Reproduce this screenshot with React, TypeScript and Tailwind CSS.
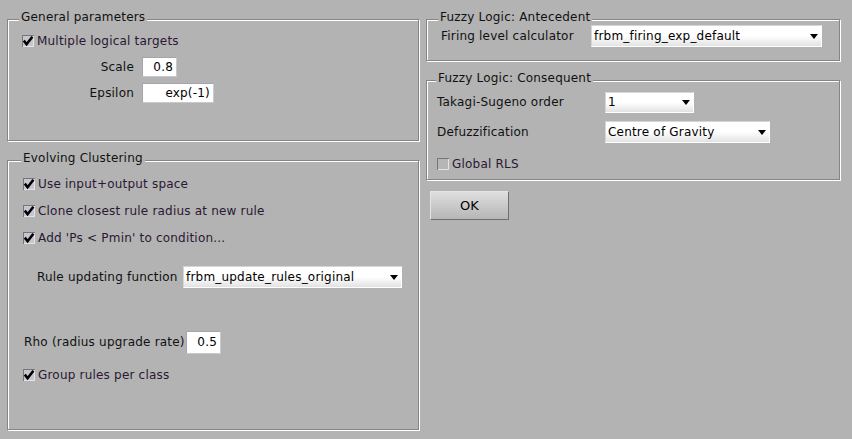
import React from "react";

const font = { fontFamily: '"DejaVu Sans", sans-serif' };

const Panel = ({
  title,
  titleLeft,
  className,
  children,
}: {
  title: string;
  titleLeft: string;
  className: string;
  children?: React.ReactNode;
}) => (
  <div
    className={
      "relative border border-[#858585] shadow-[inset_1px_1px_0_#ffffff,1px_1px_0_#ffffff] " +
      className
    }
  >
    <span
      className={
        "absolute top-[-10px] bg-[#b3b3b3] px-[2px] leading-[15px] text-[#111] whitespace-nowrap " +
        titleLeft
      }
    >
      {title}
    </span>
    {children}
  </div>
);

const CheckBox = ({ checked, label }: { checked: boolean; label: string }) => (
  <div className="flex h-[12px] items-center">
    <svg width="12" height="12" viewBox="0 0 12 12" className="shrink-0">
      <rect x="0.5" y="0.5" width="11" height="11" fill={checked ? "#c6c6d2" : "#b6b6b6"} stroke="#767676" />
      <line x1="1" y1="11.5" x2="12" y2="11.5" stroke="#e4e4e4" />
      <line x1="11.5" y1="1" x2="11.5" y2="12" stroke="#e4e4e4" />
      {checked && (
        <path d="M1.8 5.6 L4.6 9.2 L10.4 1.8" fill="none" stroke="#000" strokeWidth="2.6" />
      )}
    </svg>
    <span className="ml-[3px] whitespace-nowrap text-[#2a1832]">{label}</span>
  </div>
);

const Arrow = () => (
  <svg width="8" height="5" viewBox="0 0 8 5" className="shrink-0">
    <polygon points="0,0 8,0 4,5" fill="#000" />
  </svg>
);

const Dropdown = ({ value, className }: { value: string; className: string }) => (
  <div
    className={
      "flex items-center justify-between border border-t-[#d6d6d6] border-l-[#d6d6d6] border-r-white border-b-white bg-gradient-to-b from-white via-white to-[#e2e2e2] pl-[2px] pr-[3px] text-black " +
      className
    }
  >
    <span className="whitespace-nowrap">{value}</span>
    <Arrow />
  </div>
);

const TextBox = ({ value, className }: { value: string; className: string }) => (
  <div
    className={
      "flex items-center justify-end border border-[#a4a4b0] border-r-[#c8c8d0] border-b-[#c8c8d0] bg-white pr-[3px] text-black " +
      className
    }
  >
    {value}
  </div>
);

export default function App() {
  return (
    <div
      className="flex h-[439px] w-[852px] gap-[7px] bg-[#b3b3b3] px-[7px] pt-[19px] text-[12px] leading-[15px] tracking-[0.2px] text-[#111]"
      style={font}
    >
      {/* left column */}
      <div className="flex w-[412px] flex-col">
        <Panel title="General parameters" titleLeft="left-[11px]" className="h-[122px] pl-[14px] pt-[15px]">
          <CheckBox checked label="Multiple logical targets" />
          <div className="mt-[10px] flex items-center">
            <span className="w-[113px] pr-[1px] text-right">Scale</span>
            <TextBox value="0.8" className="ml-[7px] h-[20px] w-[35px]" />
          </div>
          <div className="mt-[6px] flex items-center">
            <span className="w-[113px] pr-[1px] text-right">Epsilon</span>
            <TextBox value="exp(-1)" className="ml-[7px] h-[20px] w-[72px]" />
          </div>
        </Panel>

        <Panel title="Evolving Clustering" titleLeft="left-[13px]" className="mt-[19px] h-[270px] pl-[15px] pt-[17px]">
          <CheckBox checked label="Use input+output space" />
          <div className="mt-[15px]">
            <CheckBox checked label="Clone closest rule radius at new rule" />
          </div>
          <div className="mt-[15px]">
            <CheckBox checked label="Add 'Ps < Pmin' to condition..." />
          </div>
          <div className="mt-[22px] flex items-center pl-[14px]">
            <span className="w-[146px] whitespace-nowrap">Rule updating function</span>
            <Dropdown value="frbm_update_rules_original" className="h-[22px] w-[219px]" />
          </div>
          <div className="mt-[43px] flex items-center pl-[1px]">
            <span className="w-[162px] overflow-hidden whitespace-nowrap">Rho (radius upgrade rate)</span>
            <TextBox value="0.5" className="h-[23px] w-[35px]" />
          </div>
          <div className="mt-[15px]">
            <CheckBox checked label="Group rules per class" />
          </div>
        </Panel>
      </div>

      {/* right column */}
      <div className="flex w-[414px] flex-col">
        <Panel title="Fuzzy Logic: Antecedent" titleLeft="left-[11px]" className="h-[42px] pl-[14px] pt-[5px]">
          <div className="flex items-center">
            <span className="w-[150px] whitespace-nowrap">Firing level calculator</span>
            <Dropdown value="frbm_firing_exp_default" className="h-[22px] w-[231px]" />
          </div>
        </Panel>

        <Panel title="Fuzzy Logic: Consequent" titleLeft="left-[9px]" className="mt-[19px] h-[100px] pl-[10px] pt-[11px]">
          <div className="flex items-center">
            <span className="w-[168px] whitespace-nowrap">Takagi-Sugeno order</span>
            <Dropdown value="1" className="h-[21px] w-[89px]" />
          </div>
          <div className="mt-[8px] flex items-center">
            <span className="w-[168px] whitespace-nowrap">Defuzzification</span>
            <Dropdown value="Centre of Gravity" className="h-[22px] w-[165px]" />
          </div>
          <div className="mt-[15px]">
            <CheckBox checked={false} label="Global RLS" />
          </div>
        </Panel>

        <button className="ml-[4px] mt-[11px] h-[29px] w-[79px] border border-t-[#e4e4e4] border-l-[#e4e4e4] border-r-[#6e6e6e] border-b-[#6e6e6e] bg-gradient-to-b from-[#dedede] to-[#b6b6b6] text-[13px] text-black">
          OK
        </button>
      </div>
    </div>
  );
}
